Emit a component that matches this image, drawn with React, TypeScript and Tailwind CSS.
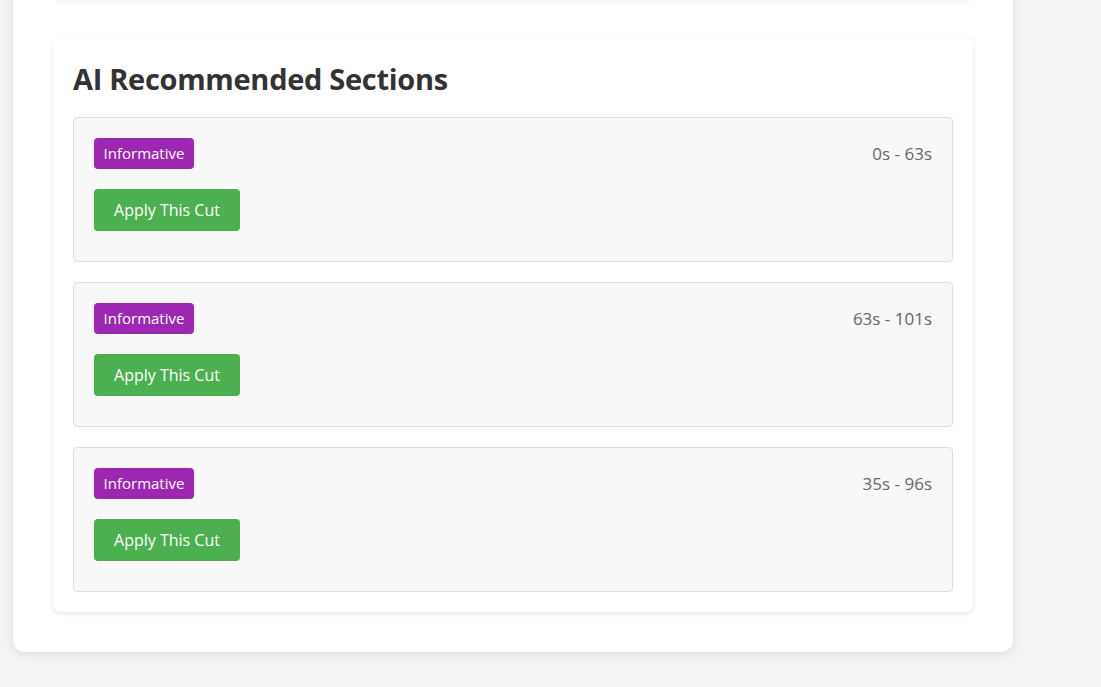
import React from "react";

const items = [
  { label: "Informative", time: "0s - 63s" },
  { label: "Informative", time: "63s - 101s" },
  { label: "Informative", time: "35s - 96s" },
];

export default function App() {
  return (
    <div
      className="min-h-[687px] w-full bg-[#f4f4f4] overflow-hidden"
      style={{ fontFamily: '"Open Sans", "Noto Sans", sans-serif' }}
    >
      <div className="ml-[13px] w-[1000px] -mt-[200px] bg-white rounded-[12px] shadow-[0_2px_10px_rgba(0,0,0,0.1)] px-10 pb-10">
        <div className="h-[200px] bg-white rounded-[8px] shadow-[0_2px_5px_rgba(0,0,0,0.06)]" />
        <div className="mt-[37px] bg-white rounded-[8px] shadow-[0_2px_5px_rgba(0,0,0,0.1)] p-5">
          <h2 className="text-[29px] leading-[36px] font-bold text-[#333] mt-[4px] mb-[20px] tracking-[-0.3px]">
            AI Recommended Sections
          </h2>
          <div className="flex flex-col gap-5">
            {items.map((it, i) => (
              <div
                key={i}
                className="bg-[#f8f8f8] border border-[#ddd] rounded-[4px] px-5 pt-5 pb-[30px]"
              >
                <div className="flex items-center justify-between h-[31px]">
                  <span className="bg-[#9c27b0] text-white text-[15px] leading-[31px] h-[31px] w-[100px] text-center rounded-[4px]">
                    {it.label}
                  </span>
                  <span className="text-[#666] text-[17px]">{it.time}</span>
                </div>
                <button className="mt-5 bg-[#4caf50] text-white text-[16px] w-[146px] h-[42px] rounded-[4px]">
                  Apply This Cut
                </button>
              </div>
            ))}
          </div>
        </div>
      </div>
    </div>
  );
}
